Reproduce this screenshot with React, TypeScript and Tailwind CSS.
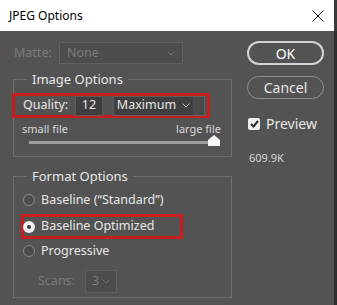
import React from "react";

const Radio = ({ checked }: { checked?: boolean }) => (
  <span
    className={
      checked
        ? "w-[12px] h-[12px] rounded-full bg-[#f0f0f0] flex items-center justify-center shrink-0"
        : "w-[12px] h-[12px] rounded-full border border-[#8a8a8a] bg-[#4c4c4c] shrink-0"
    }
  >
    {checked && <span className="w-[4px] h-[4px] rounded-full bg-[#3a3a3a]" />}
  </span>
);

const Chevron = ({ color = "#bdbdbd" }: { color?: string }) => (
  <svg width="8" height="5" viewBox="0 0 8 5" fill="none">
    <path d="M0.5 0.5 L4 4 L7.5 0.5" stroke={color} strokeWidth="1" />
  </svg>
);

export default function App() {
  return (
    <div className="w-[337px] h-[305px] overflow-hidden bg-[#535353] flex flex-col font-['Noto_Sans',sans-serif] text-[12.5px] text-[#e6e6e6]">
      {/* title bar */}
      <div className="h-[31px] shrink-0 bg-white flex items-center justify-between pl-[9px] pr-[3px] border-r-[3px] border-[#3b3b3b]">
        <span className="text-[12px] text-black">JPEG Options</span>
        <svg width="12" height="12" viewBox="0 0 12 12" className="mr-[7px]">
          <path d="M0.5 0.5 L11.5 11.5 M11.5 0.5 L0.5 11.5" stroke="#111" strokeWidth="1" />
        </svg>
      </div>

      <div className="flex flex-1 border-r-[3px] border-[#2e2e2e]">
        {/* left column */}
        <div className="w-[232px] pl-[13px] flex flex-col">
          <div className="flex items-center mt-[11px] h-[22px]">
            <span className="text-[#7b7b7b] ml-[1px] w-[45px]">Matte:</span>
            <div className="w-[124px] h-[22px] border border-[#606060] bg-[#4d4d4d] flex items-center justify-between px-[7px]">
              <span className="text-[#7b7b7b]">None</span>
              <Chevron color="#6f6f6f" />
            </div>
          </div>

          <fieldset className="mt-[7px] border border-[#6d6d6d] h-[86px] px-[0px]">
            <legend className="ml-[13px] px-[5px] leading-[16px] text-[13px]">Image Options</legend>
            <div className="-ml-[2px] mt-[6px] w-[198px] h-[25px] border-[3px] border-[#c81e1e] flex items-center">
              <span className="ml-[8px] w-[52px]">Quality:</span>
              <div className="w-[28px] h-[20px] bg-[#3e3e3e] border border-[#5a5a5a] flex items-center justify-center">12</div>
              <div className="ml-[10px] w-[92px] h-[20px] border border-[#5e5e5e] bg-[#4a4a4a] flex">
                <div className="w-[79px] h-full bg-[#3f3f3f] flex items-center justify-center gap-[6px]">
                  <span>Maximum</span>
                  <Chevron />
                </div>
              </div>
            </div>
            <div className="flex justify-between ml-[8px] mr-[10px] mt-[4px] text-[11px] leading-[14px] text-[#d6d6d6]">
              <span>small file</span>
              <span>large file</span>
            </div>
            <div className="relative ml-[15px] mr-[14px] mt-[5px] h-[3px] bg-[#9c9c9c]">
              <svg width="12" height="11" viewBox="0 0 12 11" className="absolute right-[-3px] top-[-6px]">
                <path d="M6 0 L12 5 L12 11 L0 11 L0 5 Z" fill="#f4f4f4" />
              </svg>
            </div>
          </fieldset>

          <fieldset className="mt-[11px] border border-[#6d6d6d] h-[130px]">
            <legend className="ml-[13px] px-[5px] leading-[16px] text-[13px]">Format Options</legend>
            <div className="flex flex-col">
              <div className="flex items-center gap-[6px] ml-[9px] mt-[6px] h-[20px]">
                <Radio />
                <span>Baseline (“Standard”)</span>
              </div>
              <div className="flex items-center gap-[6px] ml-[7px] mt-[4px] w-[162px] h-[25px] border-[3px] border-[#c81e1e] -mr-[2px]">
                <span className="-ml-[1px]">
                  <Radio checked />
                </span>
                <span>Baseline Optimized</span>
              </div>
              <div className="flex items-center gap-[6px] ml-[9px] mt-[2px] h-[20px]">
                <Radio />
                <span>Progressive</span>
              </div>
              <div className="flex items-center ml-[24px] mt-[9px] h-[23px]">
                <span className="text-[#7b7b7b] w-[47px]">Scans:</span>
                <div className="w-[32px] h-[23px] border border-[#606060] bg-[#4d4d4d] flex items-center justify-between px-[6px]">
                  <span className="text-[#7b7b7b]">3</span>
                  <Chevron color="#6f6f6f" />
                </div>
              </div>
            </div>
          </fieldset>
        </div>

        {/* right column */}
        <div className="flex flex-col pl-[15px]">
          <button className="mt-[10px] w-[77px] h-[24px] rounded-full border-2 border-[#d2d2d2] text-[14px] text-white flex items-center justify-center">
            OK
          </button>
          <button className="mt-[11px] w-[77px] h-[23px] rounded-full border border-[#8f8f8f] text-[14px] text-[#e8e8e8] flex items-center justify-center">
            Cancel
          </button>
          <div className="flex items-center gap-[6px] mt-[14px] ml-[1px]">
            <span className="w-[12px] h-[12px] rounded-[2px] bg-[#f0f0f0] flex items-center justify-center">
              <svg width="9" height="8" viewBox="0 0 9 8">
                <path d="M1 4 L3.5 6.5 L8 1" stroke="#2c2c2c" strokeWidth="2" fill="none" />
              </svg>
            </span>
            <span className="text-[14px]">Preview</span>
          </div>
          <span className="mt-[16px] ml-[2px] text-[11px] text-[#d6d6d6]">609.9K</span>
        </div>
      </div>
    </div>
  );
}
